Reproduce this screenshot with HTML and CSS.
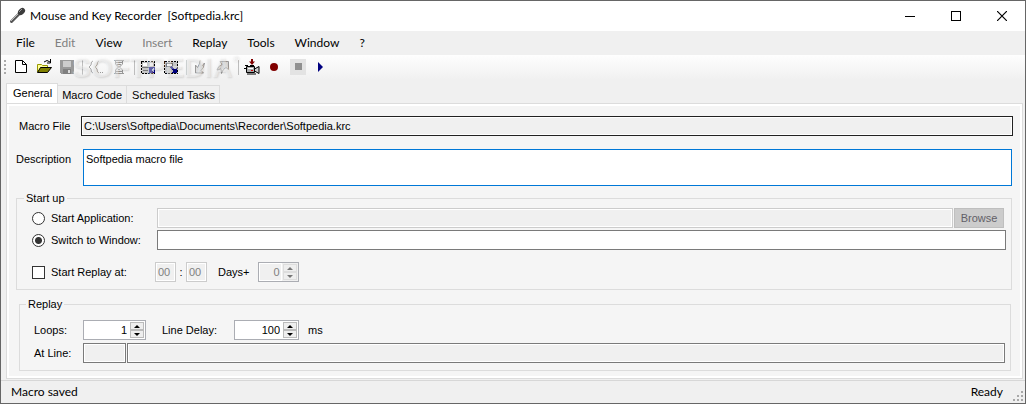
FILE: index.html
```html
<!DOCTYPE html>
<html lang="en">

<head>
    <meta charset="UTF-8">
    <title>Mouse and Key Recorder</title>
    <link rel="stylesheet" href="styles.css">
</head>

<body>
    <header class="titlebar">
        <svg class="appicon" width="18" height="18" viewBox="0 0 18 18">
            <path d="M2.500 14.500L10 7" stroke="#555" stroke-width="3" stroke-linecap="round" />
            <path d="M2 14L9 7" stroke="#bbb" stroke-width="1" />
            <ellipse cx="12.500" cy="4.500" rx="4" ry="3" transform="rotate(-45 12.500 4.500)" fill="#3c3c3c" />
            <path d="M10 5l3-3" stroke="#999" stroke-width="1" />
        </svg>
        <h1>Mouse and Key Recorder&nbsp; [Softpedia.krc]</h1>
        <div class="winbuttons">
            <button type="button" aria-label="Minimize"><svg width="10" height="10" shape-rendering="crispEdges"><path d="M0 5.500h10" stroke="#000" /></svg></button>
            <button type="button" aria-label="Maximize"><svg width="10" height="10" shape-rendering="crispEdges"><path d="M.5.5h9v9h-9z" fill="none" stroke="#000" /></svg></button>
            <button type="button" aria-label="Close"><svg width="10" height="10"><path d="M0 0l10 10M10 0L0 10" stroke="#000" stroke-width="1.200" /></svg></button>
        </div>
    </header>

    <nav class="menubar">
        <button type="button">File</button>
        <button type="button" disabled>Edit</button>
        <button type="button">View</button>
        <button type="button" disabled>Insert</button>
        <button type="button">Replay</button>
        <button type="button">Tools</button>
        <button type="button">Window</button>
        <button type="button">?</button>
    </nav>

    <div class="toolbar">
        <span class="grip"></span>
        <button type="button" aria-label="New"><svg width="16" height="16"><path d="M2.500 1.500h7l4 4v8h-11z" fill="#fff" stroke="#000" /><path d="M9.500 1.500v4h4" fill="none" stroke="#000" /></svg></button>
        <button type="button" aria-label="Open"><svg width="16" height="16"><path d="M1.500 13V5.500h4l1 1h5v2" fill="#ff9" stroke="#990" /><path d="M1.500 13.500l3-5h11l-4 5z" fill="#808000" stroke="#000" /><path d="M8 3q3-3 6 0M14.500 0v4H11" fill="none" stroke="#000" /></svg></button>
        <button type="button" aria-label="Save" disabled><svg width="16" height="16" shape-rendering="crispEdges"><path d="M1 1h14v14H2l-1-1z" fill="#999" /><path d="M4 2h8v6H4z" fill="#ccc" /><path d="M4 10h8v5H4z" fill="#808080" /><path d="M9 11h2v3H9z" fill="#ddd" /></svg></button>
        <span class="sep"></span>
        <button type="button" aria-label="Insert key" disabled><svg width="16" height="16"><path d="M5 2Q3 2 3 6L1 8l2 2q0 4 2 4M11 2Q9 2 9 6L7 8l2 2q0 4 2 4" fill="none" stroke="#aaa" /><path d="M12 13.500h1M14 13.500h1" stroke="#999" /></svg></button>
        <button type="button" aria-label="Insert delay" disabled><svg width="16" height="16"><path d="M3 1.500h10M3 14.500h10M4.500 2v3l3 3-3 3v3M11.500 2v3l-3 3 3 3v3M4 12.500h8M4 3.500h8M6 5.500h4M7 10.500h2" fill="none" stroke="#999" /></svg></button>
        <span class="sep"></span>
        <button type="button" aria-label="Insert window position"><svg width="16" height="16" shape-rendering="crispEdges"><path d="M1.500 2.500h13v12h-13z" fill="#c6c6c6" stroke="#000" stroke-dasharray="2 1" /><path d="M3 4h4v3H3zM10 4h3v3h-3z" fill="#fff" /><path d="M2 8.500h7M3 11.500h5" stroke="#777" /><path d="M9 8h6v6H9z" fill="#000080" /><path d="M14 9l-3 2 3 2z" fill="#bce" /></svg></button>
        <button type="button" aria-label="Insert window size"><svg width="16" height="16" shape-rendering="crispEdges"><path d="M1.500 2.500h13v12h-13z" fill="#c6c6c6" stroke="#000" stroke-dasharray="2 1" /><path d="M3 4h6v3H3z" fill="#fff" stroke="#777" /><path d="M8 8l5 5" stroke="#000080" stroke-width="2" /><path d="M14 8v6H8z" fill="#000080" /></svg></button>
        <span class="sep"></span>
        <button type="button" aria-label="Import" disabled><svg width="16" height="16"><path d="M8 1.500Q8 5 5.500 8.500L3.500 6v8h8L9 11.500Q12 9 12.500 4L10 7" fill="#ddd" stroke="#999" /></svg></button>
        <button type="button" aria-label="Export" disabled><svg width="16" height="16"><path d="M2 11Q3 7 7 5.500L5 2.500h8.500v8L11 8.500Q7 11 6.500 14.500L6 10z" fill="#ddd" stroke="#999" /></svg></button>
        <span class="sep"></span>
        <button type="button" aria-label="Insert recording"><svg width="16" height="16"><path d="M8 0v4" stroke="#800000" stroke-width="2" /><path d="M5 2.500h6L8 6z" fill="#800000" /><path d="M2.500 7.500h8v6h-8z" fill="#aaa" stroke="#000" /><path d="M0 9.500h3M1 6.500h3M6 6.500h4M3 15h9" stroke="#000" /><path d="M10.500 10L15 7.500v7L10.500 12z" fill="#ccc" stroke="#000" /><path d="M4 9.500h5" stroke="#fff" /><path d="M7 11.500h2" stroke="#c00" /></svg></button>
        <button type="button" aria-label="Record"><svg width="16" height="16"><circle cx="7" cy="8" r="4" fill="#800000" /></svg></button>
        <button type="button" class="stop" aria-label="Stop" disabled><svg width="16" height="16" shape-rendering="crispEdges"><path d="M5 4h7v7H5z" fill="#909090" /></svg></button>
        <button type="button" aria-label="Play"><svg width="16" height="16"><path d="M5 3v10l5-5z" fill="#000080" /></svg></button>
        <span class="watermark" aria-hidden="true">SOFTPEDIA<sup>®</sup></span>
    </div>

    <div class="tabs" role="tablist">
        <button type="button" role="tab" class="tab active" aria-selected="true">General</button>
        <button type="button" role="tab" class="tab" aria-selected="false">Macro Code</button>
        <button type="button" role="tab" class="tab" aria-selected="false">Scheduled Tasks</button>
    </div>

    <main class="panel">
        <div class="field file">
            <label for="macrofile">Macro File</label>
            <input type="text" id="macrofile" class="path" value="C:\Users\Softpedia\Documents\Recorder\Softpedia.krc" readonly>
        </div>
        <div class="field desc">
            <label for="description">Description</label>
            <textarea id="description">Softpedia macro file</textarea>
        </div>

        <fieldset class="startup">
            <legend>Start up</legend>
            <div class="row">
                <label class="choice"><input type="radio" name="startup">Start Application:</label>
                <input type="text" class="grow" aria-label="Application path" disabled>
                <button type="button" class="browse" disabled>Browse</button>
            </div>
            <div class="row">
                <label class="choice"><input type="radio" name="startup" checked>Switch to Window:</label>
                <input type="text" class="grow" aria-label="Window title">
            </div>
            <div class="row schedule">
                <label class="choice"><input type="checkbox">Start Replay at:</label>
                <input type="text" class="time" value="00" aria-label="Hours" disabled>
                <span class="colon">:</span>
                <input type="text" class="time" value="00" aria-label="Minutes" disabled>
                <label for="days" class="days">Days+</label>
                <span class="spin off">
                    <input type="text" id="days" value="0" disabled>
                    <span class="arrows"><button type="button" aria-label="More days" disabled></button><button type="button" aria-label="Fewer days" disabled></button></span>
                </span>
            </div>
        </fieldset>

        <fieldset class="replay">
            <legend>Replay</legend>
            <div class="row">
                <label for="loops" class="name">Loops:</label>
                <span class="spin loops">
                    <input type="text" id="loops" value="1">
                    <span class="arrows"><button type="button" aria-label="More loops"></button><button type="button" aria-label="Fewer loops"></button></span>
                </span>
                <label for="delay" class="delay">Line Delay:</label>
                <span class="spin">
                    <input type="text" id="delay" value="100">
                    <span class="arrows"><button type="button" aria-label="Longer delay"></button><button type="button" aria-label="Shorter delay"></button></span>
                </span>
                <span class="unit">ms</span>
            </div>
            <div class="row">
                <label for="atline" class="name">At Line:</label>
                <input type="text" id="atline" class="line" readonly>
                <input type="text" class="grow" aria-label="Line text" readonly>
            </div>
        </fieldset>
    </main>

    <footer class="statusbar">
        <span>Macro saved</span>
        <span class="ready">Ready</span>
        <svg class="sizegrip" width="12" height="12" shape-rendering="crispEdges"><path d="M8 0h2v2H8zM4 4h2v2H4zM8 4h2v2H8zM0 8h2v2H0zM4 8h2v2H4zM8 8h2v2H8z" fill="#a8a8a8" /></svg>
    </footer>
</body>

</html>
```

FILE: styles.css
```css
* {
    box-sizing: border-box;
}

body {
    display: flex;
    flex-direction: column;
    min-height: 100vh;
    margin: 0;
    border: 1px solid #666;
    background: #f0f0f0;
    color: #000;
    font: 11px/14px "Liberation Sans", Arial, sans-serif;
}

button,
input,
textarea {
    margin: 0;
    font: inherit;
    color: inherit;
}

button {
    padding: 0;
    border: 0;
    background: none;
}

svg {
    display: block;
}

/* title, menu, toolbar */

.titlebar {
    display: flex;
    align-items: center;
    height: 30px;
    padding-left: 8px;
    background: #fff;
}

.titlebar h1,
.menubar,
.statusbar {
    font: 12px/16px Lato, "Open Sans", sans-serif;
}

h1 {
    margin: 0 0 0 3px;
}

.winbuttons {
    display: flex;
    margin-left: auto;
}

.winbuttons button {
    display: flex;
    align-items: center;
    justify-content: center;
    width: 46px;
    height: 30px;
}

.menubar {
    display: flex;
    height: 24px;
    padding-left: 5px;
}

.menubar button {
    padding: 0 10px;
}

.menubar button:disabled {
    color: #808080;
}

.toolbar {
    position: relative;
    display: flex;
    align-items: center;
    height: 25px;
    padding: 0 0 1px 3px;
    background: linear-gradient(#fefefe, #f0f0f0);
}

.toolbar button {
    width: 16px;
    height: 16px;
    margin-right: 7px;
}

.toolbar .stop {
    background: #e3e3e3;
}

.grip {
    width: 2px;
    height: 15px;
    margin-right: 7px;
    background: repeating-linear-gradient(#aaa 0 2px, transparent 2px 4px);
}

.sep {
    width: 1px;
    height: 15px;
    margin-right: 5px;
    background: #bdbdbd;
}

.watermark {
    position: absolute;
    left: 71px;
    top: 0;
    color: rgba(255, 255, 255, .4);
    font: bold 28px/26px "Liberation Sans", Arial, sans-serif;
    text-shadow: 1px 1px 2px rgba(0, 0, 0, .12);
    pointer-events: none;
}

.watermark sup {
    font-size: 9px;
    line-height: 9px;
    vertical-align: top;
}

/* tabs */

.tabs {
    display: flex;
    align-items: flex-end;
    height: 23px;
    padding: 3px 0 0 5px;
}

.tab {
    height: 18px;
    padding: 0 4px;
    border: 1px solid #dcdcdc;
    border-width: 1px 1px 0 0;
}

.tab.active {
    height: 20px;
    padding: 0 5px 2px 6px;
    border-left-width: 1px;
    background: #fff;
}

.tab:last-child {
    padding-left: 5px;
}

.panel {
    flex: 1;
    margin: 0 2px 1px 5px;
    padding: 12px 9px 6px 6px;
    border: 1px solid #dcdcdc;
    outline: 2px solid #fff;
    outline-offset: -3px;
    background: #f5f5f5;
}

.panel input[type="text"],
textarea {
    min-width: 0;
    height: 20px;
    padding: 0 2px;
    border: 1px solid #7a7a7a;
    border-radius: 0;
    background: #fff;
    outline: 0;
}

.panel input[type="text"]:read-only {
    background: #f0f0f0;
    box-shadow: inset 0 0 0 1px #fff;
}

.panel input[type="text"]:disabled {
    border-color: #ccc;
    background: #f0f0f0;
    color: #808080;
}

.field {
    display: flex;
    margin-left: 3px;
}

.field label {
    padding-top: 3px;
}

.file label {
    width: 65px;
    padding-left: 3px;
}

.panel .path:read-only {
    flex: 1;
    border-color: #222;
}

.desc {
    margin: 13px 1px 0 3px;
}

.desc label {
    width: 67px;
}

textarea {
    flex: 1;
    height: 37px;
    padding: 2px;
    border-color: #0078d7;
    resize: none;
}

/* groups */

fieldset {
    display: flex;
    flex-direction: column;
    min-width: 0;
    margin: 6px 1px 0 3px;
    padding: 3px 5px 7px 15px;
    border: 1px solid #dcdcdc;
}

legend {
    margin-left: -8px;
    padding: 0 2px;
    line-height: 13px;
}

.row {
    display: flex;
    align-items: center;
    height: 20px;
}

.startup .row + .row {
    margin-top: 2px;
}

.startup .row + .schedule {
    margin-top: 12px;
}

.grow {
    flex: 1;
}

.choice {
    display: flex;
    align-items: center;
    gap: 6px;
    width: 125px;
}

.choice input {
    appearance: none;
    width: 13px;
    height: 13px;
    border: 1px solid #333;
    background: #fff;
}

.choice input[type="radio"] {
    border-radius: 50%;
}

.choice input:checked {
    background: radial-gradient(#333 0 3px, #fff 4px);
}

.browse {
    width: 50px;
    height: 20px;
    margin: 0 2px 0 1px;
    border: 1px solid #bfbfbf;
    background: #ccc;
    color: #625f68;
}

.schedule .choice {
    width: 123px;
}

.panel .time {
    width: 21px;
}

.colon {
    width: 10px;
    text-align: center;
}

.days {
    margin: 0 8px 0 11px;
}

.spin {
    display: flex;
    width: 65px;
    height: 20px;
    border: 1px solid #abadb3;
    background: #fff;
}

.panel .spin input {
    flex: 1;
    height: 18px;
    border: 0;
    background: none;
    text-align: right;
}

.arrows {
    display: flex;
    flex-direction: column;
    width: 16px;
    padding: 1px;
}

.arrows button {
    flex: 1;
    border: 1px solid #bbb;
    background: #eee;
}

.arrows button::before {
    content: "";
    display: block;
    width: 0;
    margin: auto;
    border: 3px solid transparent;
    border-top: 0;
    border-bottom-color: #000;
}

.arrows button + button::before {
    border-top: 3px solid #000;
    border-bottom: 0;
}

.off {
    width: 41px;
    background: #f0f0f0;
}

.off .arrows button {
    border-color: #ddd;
}

.off .arrows button::before {
    border-bottom-color: #777;
}

.off .arrows button + button::before {
    border-top-color: #777;
}

.replay {
    margin: 8px 2px 0 6px;
    padding: 9px 5px 7px 14px;
}

.name {
    width: 49px;
}

.replay .row + .row {
    margin-top: 3px;
}

.loops {
    width: 63px;
}

.delay {
    width: 72px;
    margin-left: 16px;
}

.unit {
    margin-left: 9px;
}

.panel .line {
    width: 43px;
    margin-right: 1px;
}

/* status */

.statusbar {
    display: flex;
    align-items: center;
    height: 23px;
    padding: 0 0 0 10px;
    border-top: 1px solid #d7d7d7;
}

.ready {
    margin-left: auto;
}

.sizegrip {
    align-self: flex-end;
    margin-left: 10px;
}
```
